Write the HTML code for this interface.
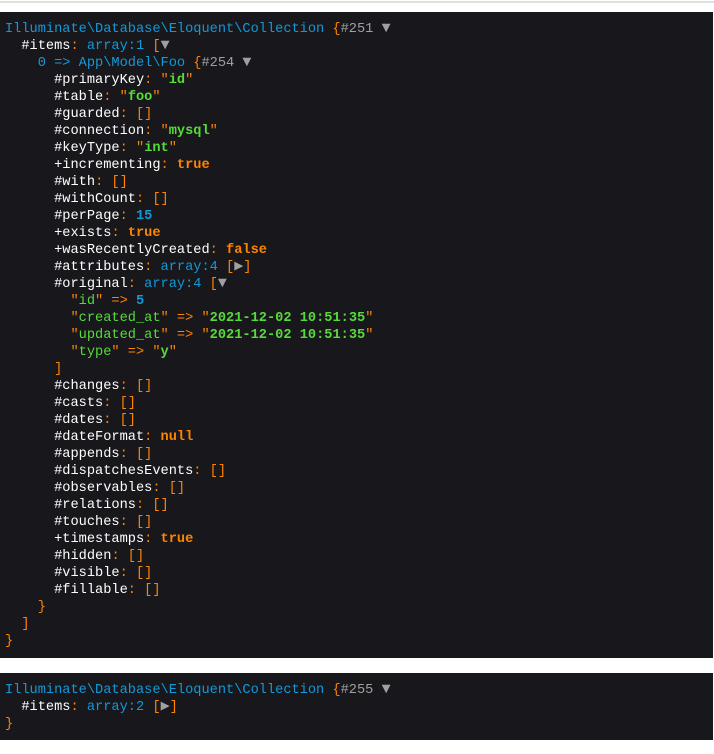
<!DOCTYPE html>
<html><head><meta charset="utf-8"><style>
html,body{margin:0;padding:0;background:#fff;width:714px;height:754px;overflow:hidden}
.rule{position:absolute;left:0;top:1px;width:714px;height:2px;background:#e0e0e0}
pre{position:absolute;left:0;width:713px;margin:0;background:#18171B;color:#FF8400;font-family:"Liberation Mono",monospace;font-size:13.65px;line-height:17px;padding:0 0 0 5px;box-sizing:border-box;white-space:pre}
.c{color:#1299DA}.r{color:#A0A0A0}.k{color:#fff}.s{color:#56DB3A;font-weight:bold}.sk{color:#56DB3A}
.n{color:#1299DA;font-weight:bold}.b{color:#FF8400;font-weight:bold}.t{color:#A0A0A0;font-size:15px;line-height:15px}
</style></head><body>
<div class="rule"></div>
<pre style="top:12px;height:646px;padding-top:9px"><span class="c">Illuminate\Database\Eloquent\Collection</span> {<span class="r">#251</span> <span class="t">▼</span>
  <span class="k">#items</span>: <span class="c">array:1</span> [<span class="t">▼</span>
    <span class="c">0 =&gt; App\Model\Foo</span> {<span class="r">#254</span> <span class="t">▼</span>
      <span class="k">#primaryKey</span>: "<span class="s">id</span>"
      <span class="k">#table</span>: "<span class="s">foo</span>"
      <span class="k">#guarded</span>: []
      <span class="k">#connection</span>: "<span class="s">mysql</span>"
      <span class="k">#keyType</span>: "<span class="s">int</span>"
      <span class="k">+incrementing</span>: <span class="b">true</span>
      <span class="k">#with</span>: []
      <span class="k">#withCount</span>: []
      <span class="k">#perPage</span>: <span class="n">15</span>
      <span class="k">+exists</span>: <span class="b">true</span>
      <span class="k">+wasRecentlyCreated</span>: <span class="b">false</span>
      <span class="k">#attributes</span>: <span class="c">array:4</span> [<span class="t">▶</span>]
      <span class="k">#original</span>: <span class="c">array:4</span> [<span class="t">▼</span>
        "<span class="sk">id</span>" =&gt; <span class="n">5</span>
        "<span class="sk">created_at</span>" =&gt; "<span class="s">2021-12-02 10:51:35</span>"
        "<span class="sk">updated_at</span>" =&gt; "<span class="s">2021-12-02 10:51:35</span>"
        "<span class="sk">type</span>" =&gt; "<span class="s">y</span>"
      ]
      <span class="k">#changes</span>: []
      <span class="k">#casts</span>: []
      <span class="k">#dates</span>: []
      <span class="k">#dateFormat</span>: <span class="b">null</span>
      <span class="k">#appends</span>: []
      <span class="k">#dispatchesEvents</span>: []
      <span class="k">#observables</span>: []
      <span class="k">#relations</span>: []
      <span class="k">#touches</span>: []
      <span class="k">+timestamps</span>: <span class="b">true</span>
      <span class="k">#hidden</span>: []
      <span class="k">#visible</span>: []
      <span class="k">#fillable</span>: []
    }
  ]
}</pre>
<pre style="top:673px;height:67px;padding-top:9px"><span class="c">Illuminate\Database\Eloquent\Collection</span> {<span class="r">#255</span> <span class="t">▼</span>
  <span class="k">#items</span>: <span class="c">array:2</span> [<span class="t">▶</span>]
}</pre>
</body></html>
